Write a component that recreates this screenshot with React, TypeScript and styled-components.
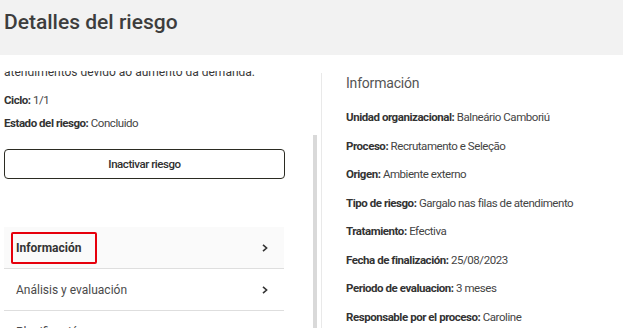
import { useLayoutEffect, useRef } from "react";
import styled, { createGlobalStyle } from "styled-components";

const GlobalStyle = createGlobalStyle`
  html, body, #root {
    height: 100%;
  }

  body {
    margin: 0;
    overflow: hidden;
    font-family: Roboto, "Noto Sans", Arial, sans-serif;
    color: #333;
    background: #fff;
  }
`;

const Page = styled.div`
  display: flex;
  flex-direction: column;
  height: 100vh;
`;

const Header = styled.header`
  flex: 0 0 55px;
  box-sizing: border-box;
  padding: 9px 4px 0;
  background: #f2f2f2;
`;

const Title = styled.h1`
  margin: 0;
  font-size: 21px;
  line-height: 26px;
  font-weight: 500;
  color: #3d3d3d;
`;

const Body = styled.div`
  flex: 1;
  min-height: 0;
  display: flex;
  padding-top: 16px;
`;

const LeftPane = styled.div`
  position: relative;
  flex: 0 0 321px;
  height: 100%;
`;

const Scroller = styled.div`
  height: 100%;
  overflow: hidden;
  padding: 0 36px 0 4px;
  box-sizing: border-box;
`;

const ScrollThumb = styled.div`
  position: absolute;
  top: 64px;
  bottom: 0;
  right: 4px;
  width: 4px;
  background: #d9d9d9;
`;

const Description = styled.p`
  margin: 0 0 11px;
  font-size: 12px;
  line-height: 18px;
  color: #3a3a3a;
`;

const Fields = styled.div<{ $gap: number }>`
  display: flex;
  flex-direction: column;
  gap: ${(p) => p.$gap}px;
`;

const Field = styled.div`
  font-size: 11.5px;
  line-height: 16px;
  letter-spacing: -0.45px;
  color: #444;

  b {
    font-weight: 700;
    color: #333;
  }
`;

const OutlineButton = styled.button`
  display: block;
  box-sizing: border-box;
  width: 281px;
  height: 30px;
  margin-top: 18px;
  border: 1px solid #2b2b22;
  border-radius: 4px;
  background: #fff;
  font-family: inherit;
  font-size: 11.5px;
  letter-spacing: -0.45px;
  font-weight: 500;
  color: #2f2f2f;
  cursor: pointer;
`;

const Menu = styled.nav`
  width: 280px;
  margin-top: 48px;
`;

const MenuRow = styled.div<{ $active?: boolean }>`
  display: flex;
  align-items: center;
  justify-content: space-between;
  height: 41px;
  padding: 0 16px 0 12px;
  border-bottom: 1px solid #dedede;
  background: ${(p) => (p.$active ? "#fafafa" : "#fff")};
  font-size: 12px;
  font-weight: ${(p) => (p.$active ? 700 : 400)};
  color: ${(p) => (p.$active ? "#333" : "#4a4a4a")};
`;

const Marked = styled.span`
  position: relative;

  &::after {
    content: "";
    position: absolute;
    inset: -9px -16px -9px -5px;
    border: 2px solid #e6000c;
    border-radius: 2px;
  }
`;

const RightPane = styled.section`
  flex: 1;
  margin-top: 2px;
  padding-left: 24px;
  border-left: 1px solid #e9e9e9;
`;

const PaneTitle = styled.h2`
  margin: 0 0 16px;
  font-size: 14px;
  line-height: 20px;
  letter-spacing: -0.2px;
  font-weight: 400;
  color: #555;
`;

function Chevron() {
  return (
    <svg width="6" height="8" viewBox="0 0 6 8" fill="none">
      <polyline points="1,0.8 4.6,4 1,7.2" stroke="#333" strokeWidth="1.6" />
    </svg>
  );
}

const menuItems = ["Información", "Análisis y evaluación", "Planificación", "Monitoreo", "Historial"];

const details: [string, string][] = [
  ["Unidad organizacional", "Balneário Camboriú"],
  ["Proceso", "Recrutamento e Seleção"],
  ["Origen", "Ambiente externo"],
  ["Tipo de riesgo", "Gargalo nas filas de atendimento"],
  ["Tratamiento", "Efectiva"],
  ["Fecha de finalización", "25/08/2023"],
  ["Periodo de evaluacion", "3 meses"],
  ["Responsable por el proceso", "Caroline"],
];

export default function App() {
  const scrollerRef = useRef<HTMLDivElement>(null);
  const descRef = useRef<HTMLParagraphElement>(null);

  // the side panel is scrolled so only the end of the description shows
  useLayoutEffect(() => {
    const scroller = scrollerRef.current;
    const desc = descRef.current;
    if (!scroller || !desc) return;
    const bottom = desc.getBoundingClientRect().bottom - scroller.getBoundingClientRect().top;
    scroller.scrollTop = bottom - 10;
  }, []);

  return (
    <Page>
      <GlobalStyle />
      <Header>
        <Title>Detalles del riesgo</Title>
      </Header>
      <Body>
        <LeftPane>
          <Scroller ref={scrollerRef}>
            <Description ref={descRef}>
              <b>Descripción:</b> Gargalo nas filas de atendimento em horários de pico, gerando demora nos
              <br />
              atendimentos devido ao aumento da demanda.
            </Description>
            <Fields $gap={7}>
              <Field>
                <b>Ciclo:</b> 1/1
              </Field>
              <Field>
                <b>Estado del riesgo:</b> Concluido
              </Field>
            </Fields>
            <OutlineButton type="button">Inactivar riesgo</OutlineButton>
            <Menu>
              {menuItems.map((item, i) => (
                <MenuRow key={item} $active={i === 0}>
                  {i === 0 ? <Marked>{item}</Marked> : <span>{item}</span>}
                  <Chevron />
                </MenuRow>
              ))}
            </Menu>
          </Scroller>
          <ScrollThumb />
        </LeftPane>
        <RightPane>
          <PaneTitle>Información</PaneTitle>
          <Fields $gap={12.57}>
            {details.map(([label, value]) => (
              <Field key={label}>
                <b>{label}:</b> {value}
              </Field>
            ))}
          </Fields>
        </RightPane>
      </Body>
    </Page>
  );
}
